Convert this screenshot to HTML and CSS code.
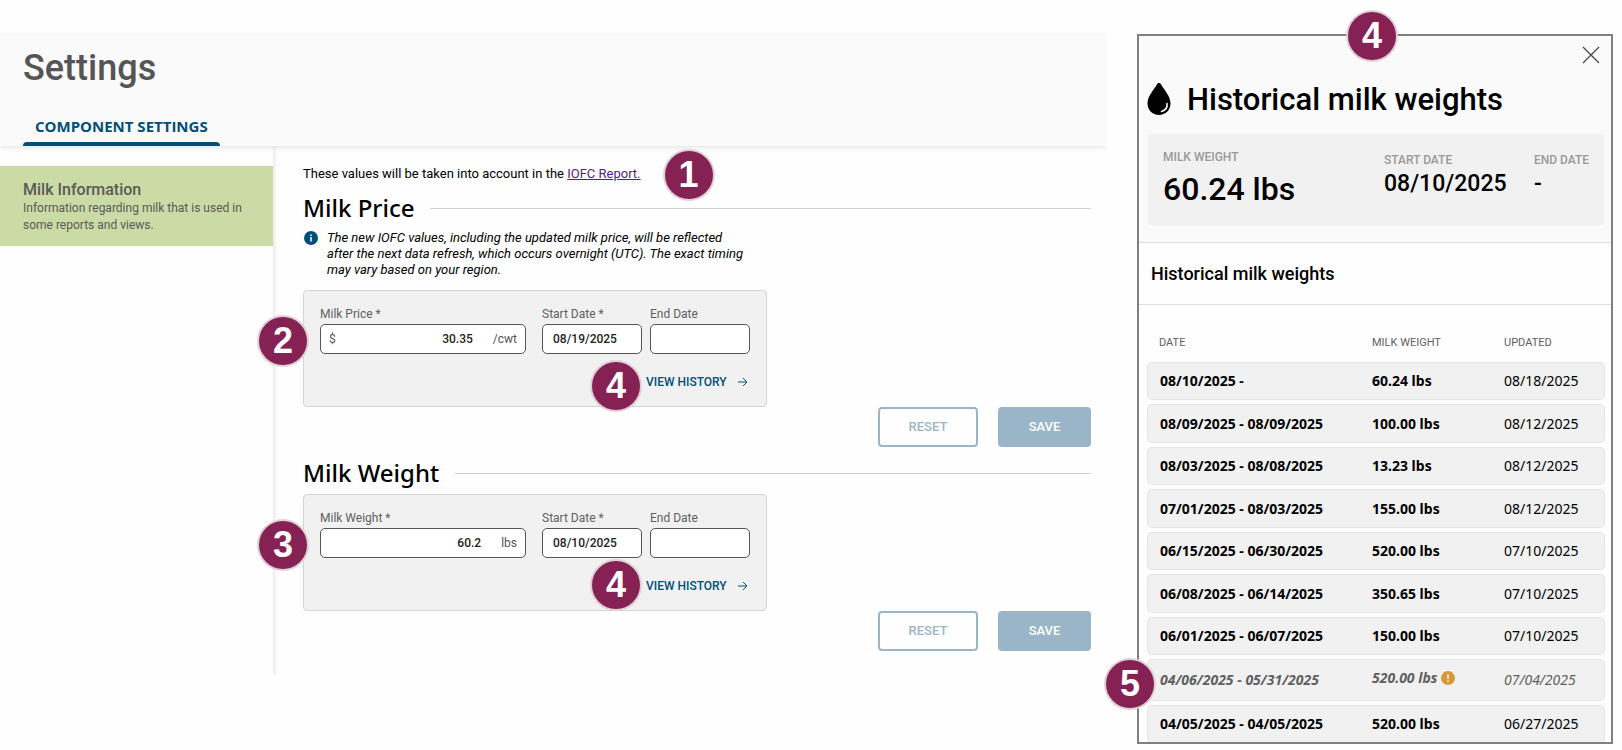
FILE: index.html
```
<!DOCTYPE html>
<html lang="en">

<head>
  <meta charset="UTF-8">
  <meta name="viewport" content="width=device-width, initial-scale=1.0">
  <title>Settings</title>
  <link rel="stylesheet" href="styles.css">
</head>

<body>
  <div class="settings">
    <header class="header">
      <h1>Settings</h1>
      <nav>
        <a class="tab" href="#component">COMPONENT SETTINGS</a>
      </nav>
    </header>

    <div class="columns">
      <aside class="sidebar">
        <a class="side-item" href="#milk">
          <strong>Milk Information</strong>
          <span>Information regarding milk that is used in some reports and views.</span>
        </a>
      </aside>

      <main class="content">
        <p class="intro">These values will be taken into account in the
          <span class="anchor"><a href="#iofc">IOFC Report.</a><span class="badge badge-report">1</span></span>
        </p>

        <section>
          <h2>Milk Price</h2>
          <div class="note">
            <svg width="14" height="14" viewBox="0 0 14 14">
              <circle cx="7" cy="7" r="7" fill="#004f76" />
              <path d="M7 6v4.500M7 3.500v1.500" stroke="#fff" stroke-width="1.500" />
            </svg>
            <p>The new IOFC values, including the updated milk price, will be reflected after the next data refresh, which occurs overnight (UTC). The exact timing may vary based on your region.</p>
          </div>
          <form class="card">
            <div class="fields">
              <div class="field field-value">
                <label for="price">Milk Price *</label>
                <div class="box">
                  <span>$</span>
                  <input id="price" type="text" value="30.35">
                  <span class="unit">/cwt</span>
                </div>
              </div>
              <div class="field">
                <label for="price-start">Start Date *</label>
                <div class="box"><input id="price-start" type="text" value="08/19/2025"></div>
              </div>
              <div class="field">
                <label for="price-end">End Date</label>
                <div class="box"><input id="price-end" type="text"></div>
              </div>
            </div>
            <a class="history-link" href="#history">VIEW HISTORY
              <svg width="10" height="10" viewBox="0 0 10 10">
                <path d="M0 5h9M5 1l4 4-4 4" fill="none" stroke="currentColor" />
              </svg>
              <span class="badge badge-price-history">4</span>
            </a>
            <span class="badge badge-card">2</span>
          </form>
          <div class="actions">
            <button class="btn btn-reset" type="button">RESET</button>
            <button class="btn btn-save" type="button">SAVE</button>
          </div>
        </section>

        <section>
          <h2>Milk Weight</h2>
          <form class="card">
            <div class="fields">
              <div class="field field-value">
                <label for="weight">Milk Weight *</label>
                <div class="box">
                  <input id="weight" type="text" value="60.2">
                  <span class="unit">lbs</span>
                </div>
              </div>
              <div class="field">
                <label for="weight-start">Start Date *</label>
                <div class="box"><input id="weight-start" type="text" value="08/10/2025"></div>
              </div>
              <div class="field">
                <label for="weight-end">End Date</label>
                <div class="box"><input id="weight-end" type="text"></div>
              </div>
            </div>
            <a class="history-link" href="#history">VIEW HISTORY
              <svg width="10" height="10" viewBox="0 0 10 10">
                <path d="M0 5h9M5 1l4 4-4 4" fill="none" stroke="currentColor" />
              </svg>
              <span class="badge badge-weight-history">4</span>
            </a>
            <span class="badge badge-card">3</span>
          </form>
          <div class="actions">
            <button class="btn btn-reset" type="button">RESET</button>
            <button class="btn btn-save" type="button">SAVE</button>
          </div>
        </section>
      </main>
    </div>
  </div>

  <aside class="history" id="history">
    <div class="panel">
      <div class="panel-top">
        <button class="close" type="button" aria-label="Close">
          <svg width="18" height="18" viewBox="0 0 18 18">
            <path d="M1 1l16 16M17 1L1 17" stroke="#444" stroke-width="1.200" />
          </svg>
        </button>
        <div class="panel-title">
          <svg width="24" height="32" viewBox="0 0 24 32">
            <path d="M12 0c1 0 1.600.600 2 1.300C17 7 23.500 13 23.500 20.500 23.500 27 18.500 32 12 32S.500 27 .500 20.500C.500 13 7 7 10 1.300c.400-.700 1-1.300 2-1.300z" />
            <path d="M20 20.500c.500 4-2 7-5.500 8" fill="none" stroke="#fafafa" stroke-width="1.600" stroke-linecap="round" />
          </svg>
          <h2>Historical milk weights</h2>
        </div>
        <dl class="summary">
          <div class="current">
            <dt>MILK WEIGHT</dt>
            <dd>60.24 lbs</dd>
          </div>
          <div class="start">
            <dt>START DATE</dt>
            <dd>08/10/2025</dd>
          </div>
          <div>
            <dt>END DATE</dt>
            <dd>-</dd>
          </div>
        </dl>
      </div>
      <h3>Historical milk weights</h3>
      <table>
        <thead>
          <tr><th class="col-date">DATE</th><th class="col-weight">MILK WEIGHT</th><th>UPDATED</th></tr>
        </thead>
        <tbody>
          <tr><td>08/10/2025 -</td><td>60.24 lbs</td><td>08/18/2025</td></tr>
          <tr><td>08/09/2025 - 08/09/2025</td><td>100.00 lbs</td><td>08/12/2025</td></tr>
          <tr><td>08/03/2025 - 08/08/2025</td><td>13.23 lbs</td><td>08/12/2025</td></tr>
          <tr><td>07/01/2025 - 08/03/2025</td><td>155.00 lbs</td><td>08/12/2025</td></tr>
          <tr><td>06/15/2025 - 06/30/2025</td><td>520.00 lbs</td><td>07/10/2025</td></tr>
          <tr><td>06/08/2025 - 06/14/2025</td><td>350.65 lbs</td><td>07/10/2025</td></tr>
          <tr><td>06/01/2025 - 06/07/2025</td><td>150.00 lbs</td><td>07/10/2025</td></tr>
          <tr class="warning">
            <td>04/06/2025 - 05/31/2025</td>
            <td class="flagged">520.00 lbs
              <svg width="14" height="14" viewBox="0 0 14 14">
                <circle cx="7" cy="7" r="7" fill="#d69a35" />
                <path d="M7 3.500v4.500M7 9.200v1.500" stroke="#fff" stroke-width="1.400" />
              </svg>
            </td>
            <td>07/04/2025</td>
          </tr>
          <tr><td>04/05/2025 - 04/05/2025</td><td>520.00 lbs</td><td>06/27/2025</td></tr>
        </tbody>
      </table>
    </div>
    <span class="badge badge-panel">4</span>
    <span class="badge badge-row">5</span>
  </aside>
</body>

</html>
```
FILE: styles.css
```
* {
  box-sizing: border-box;
}

body {
  background: #fefefe;
  color: #000;
  display: flex;
  font-family: Roboto, "Liberation Sans", sans-serif;
  font-size: 14px;
  gap: 30px;
  height: 100vh;
  margin: 0;
  overflow: hidden;
}

h1, h2, h3, p, dl, dd {
  margin: 0;
}

svg {
  flex: none;
}

/* settings page */

.settings {
  flex: 1;
  min-width: 0;
  padding-top: 33px;
}

.header {
  background: #fafafa;
  box-shadow: 0 1px 6px rgba(0, 0, 0, .12);
  clip-path: inset(0 0 -8px 0);
  padding: 14px 23px 0;
  position: relative;
}

h1 {
  color: #555;
  font-size: 36px;
  font-weight: 500;
  line-height: 42px;
}

nav {
  display: flex;
  padding-top: 16px;
}

.tab {
  color: #004f76;
  font-family: "Open Sans", sans-serif;
  font-size: 15px;
  font-weight: 700;
  line-height: 20px;
  padding: 11px 12px 10px;
  position: relative;
  text-decoration: none;
}

.tab::after {
  background: #004f76;
  border-radius: 4px 4px 0 0;
  bottom: 0;
  content: "";
  height: 4px;
  left: 0;
  position: absolute;
  right: 0;
}

.columns {
  display: flex;
}

.sidebar {
  box-shadow: 1px 0 4px rgba(0, 0, 0, .12);
  clip-path: inset(0 -6px 0 0);
  flex: 0 0 273px;
  padding-top: 20px;
}

.side-item {
  background: #cbdba5;
  color: #5a5a5a;
  display: block;
  font-size: 12px;
  line-height: 17px;
  padding: 13px 24px 12px 23px;
  text-decoration: none;
}

.side-item strong {
  display: block;
  font-size: 16px;
  font-weight: 500;
  line-height: 21px;
}

.content {
  flex: 1;
  min-width: 0;
  padding: 18px 16px 24px 30px;
}

.intro {
  font-size: 13px;
  line-height: 20px;
  margin-bottom: 8px;
}

.intro a {
  color: #551a8b;
}

.anchor {
  position: relative;
}

.content h2 {
  align-items: center;
  display: flex;
  font-family: "Noto Sans", sans-serif;
  font-size: 24px;
  font-weight: 500;
  gap: 16px;
  line-height: 32px;
}

.content h2::after {
  background: #d2d2d2;
  content: "";
  flex: 1;
  height: 1px;
}

.note {
  display: flex;
  font-size: 13px;
  font-style: italic;
  gap: 9px;
  line-height: 16px;
  margin-bottom: 12px;
  padding: 6px 20px 0 0;
  width: 464px;
}

.note svg {
  margin: 1px 0 0 1px;
}

.card {
  background: #f1f1f1;
  border: 1px solid #d2d5d5;
  border-radius: 4px;
  height: 117px;
  padding: 15px 16px 0;
  position: relative;
  width: 464px;
}

.fields {
  display: flex;
  gap: 8px;
}

.field {
  flex: 0 0 100px;
  min-width: 0;
}

.field-value {
  flex: 0 0 206px;
  margin-right: 8px;
}

label {
  color: #606060;
  display: block;
  font-size: 12px;
  line-height: 16px;
  margin-bottom: 2px;
}

.box {
  align-items: center;
  background: #fff;
  border: 1px solid #555;
  border-radius: 5px;
  color: #555;
  display: flex;
  font-size: 12px;
  height: 30px;
  padding: 0 8px 0 10px;
}

.field-value .box {
  padding-left: 8px;
}

.box input {
  background: none;
  border: 0;
  color: #222;
  flex: 1;
  font: 500 12px Roboto, "Liberation Sans", sans-serif;
  min-width: 0;
  outline: 0;
  padding: 0;
}

.field-value input {
  text-align: right;
}

.unit {
  margin-left: 20px;
}

.history-link {
  align-items: center;
  color: #004f76;
  display: flex;
  font-size: 12px;
  font-weight: 500;
  justify-content: space-between;
  line-height: 16px;
  margin: 20px 2px 0 auto;
  position: relative;
  text-decoration: none;
  white-space: nowrap;
  width: 102px;
}

.actions {
  display: flex;
  gap: 20px;
  justify-content: flex-end;
}

.btn {
  background: #9ab5c8;
  border: 2px solid #9ab5c8;
  border-radius: 4px;
  color: #fff;
  font: 500 13px/34px Roboto, "Liberation Sans", sans-serif;
  height: 40px;
  padding: 0;
  width: 93px;
}

.btn-reset {
  background: none;
  color: #9ab5c8;
  width: 100px;
}

section + section {
  padding-top: 10px;
}

section + section h2 {
  margin-bottom: 5px;
}

/* history panel */

.history {
  flex: 0 0 476px;
  margin: 34px 9px 6px 0;
  position: relative;
}

.panel {
  border: 2px solid #808080;
  height: 100%;
  overflow: hidden;
}

.panel-top {
  background: #fafafa;
  border-bottom: 1px solid #ddd;
  padding: 10px 6px 17px 8px;
}

.close {
  background: none;
  border: 0;
  display: block;
  height: 18px;
  margin: 0 5px 0 auto;
  padding: 0;
}

.close svg {
  display: block;
}

.panel-title {
  align-items: center;
  display: flex;
  gap: 16px;
  padding: 16px 0 14px;
}

.panel-title h2 {
  font-size: 31px;
  font-weight: 500;
  line-height: 40px;
}

.panel-title svg {
  margin-bottom: 2px;
}

.summary {
  background: #f1f1f1;
  display: flex;
  height: 91px;
  margin: 0 1px;
  padding: 16px 15px 0;
}

.summary div {
  padding-top: 3px;
}

.summary .current {
  flex: 1;
  padding-top: 0;
}

.summary .start {
  width: 150px;
}

.summary div:last-child {
  width: 55px;
}

dt {
  color: #999;
  font-size: 12px;
  font-weight: 500;
  line-height: 14px;
  white-space: nowrap;
}

dd {
  font-size: 23px;
  font-weight: 500;
  line-height: 34px;
}

.current dd {
  font-size: 32px;
  line-height: 50px;
}

h3 {
  border-bottom: 1px solid #ddd;
  font-size: 18px;
  font-weight: 500;
  line-height: 61px;
  padding-left: 12px;
}

table {
  border-collapse: separate;
  border-spacing: 0 4px;
  font-family: "Noto Sans", sans-serif;
  margin: 20px 6px 0 8px;
  table-layout: fixed;
  width: 458px;
}

th {
  color: #606060;
  font-family: Roboto, "Liberation Sans", sans-serif;
  font-size: 11px;
  font-weight: 400;
  height: 29px;
  padding: 0 0 2px 12px;
  text-align: left;
}

.col-date {
  width: 212px;
}

.col-weight {
  width: 132px;
}

td {
  background: #f1f1f1;
  border: 1px solid #e4e4e4;
  border-width: 1px 0;
  font-weight: 700;
  height: 38px;
  line-height: 20px;
  padding: 0 0 0 13px;
  white-space: nowrap;
}

th + th {
  padding-left: 13px;
}

tr:nth-child(even) td {
  height: 39px;
}

td:first-child {
  border-left-width: 1px;
  border-radius: 5px 0 0 5px;
  padding-left: 12px;
}

td:last-child {
  border-radius: 0 5px 5px 0;
  border-right-width: 1px;
  font-weight: 400;
}

tr.warning td {
  color: #606060;
  font-style: italic;
  height: 42px;
}

.warning .flagged {
  padding-bottom: 4px;
}

.flagged svg {
  vertical-align: -2px;
}

/* numbered callouts */

.badge {
  background: #852253;
  border-radius: 50%;
  box-shadow: 0 0 0 2px #dfd0d8;
  color: #fff;
  font: 700 36px/48px "Liberation Sans", Arial, sans-serif;
  height: 48px;
  position: absolute;
  text-align: center;
  width: 48px;
}

.badge-report {
  left: calc(100% + 24px);
  top: -15px;
}

.badge-card {
  left: -45px;
  top: 26px;
}

.badge-price-history {
  right: calc(100% + 6px);
  top: -12px;
}

.badge-weight-history {
  right: calc(100% + 6px);
  top: -17px;
}

.badge-panel {
  left: 211px;
  top: -22px;
}

.badge-row {
  left: -31px;
  top: 626px;
}
```
